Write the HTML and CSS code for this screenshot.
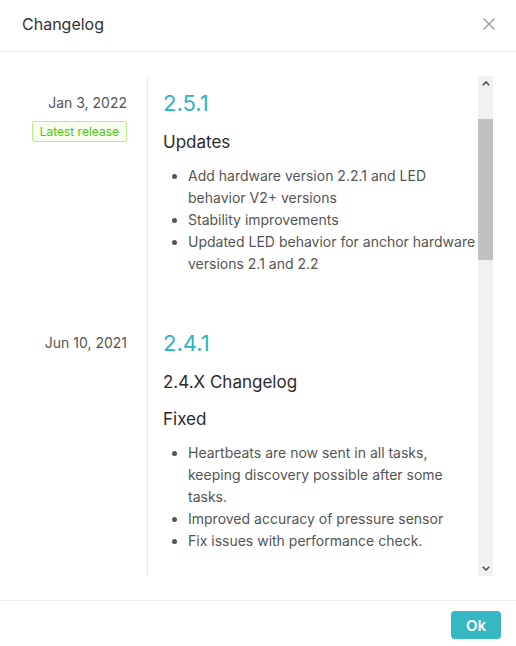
FILE: index.html
```html
<!DOCTYPE html>
<html lang="en">
<head>
  <meta charset="UTF-8" />
  <meta name="viewport" content="width=device-width, initial-scale=1.0"/>
  <title>Changelog</title>
  <link rel="stylesheet" href="styles.css">
</head>
<body>
  <div class="modal">
    <div class="modal-header">
      <span class="modal-title">Changelog</span>
      <button class="close-btn" aria-label="Close">
        <svg width="12" height="12" viewBox="0 0 12 12">
          <path d="M0.5 0.5 L11.5 11.5 M11.5 0.5 L0.5 11.5" stroke="#9a9a9a" stroke-width="1.4" fill="none"/>
        </svg>
      </button>
    </div>

    <div class="modal-body">
      <div class="timeline">
        <div class="release">
          <div class="release-date">
            <div class="date">Jan 3, 2022</div>
            <span class="tag">Latest release</span>
          </div>
          <div class="release-body">
            <div class="version">2.5.1</div>
            <h3>Updates</h3>
            <ul>
              <li>Add hardware version 2.2.1 and LED behavior V2+ versions</li>
              <li>Stability improvements</li>
              <li>Updated LED behavior for anchor hardware versions 2.1 and 2.2</li>
            </ul>
          </div>
        </div>

        <div class="release">
          <div class="release-date">
            <div class="date">Jun 10, 2021</div>
          </div>
          <div class="release-body">
            <div class="version">2.4.1</div>
            <h3>2.4.X Changelog</h3>
            <h3>Fixed</h3>
            <ul>
              <li>Heartbeats are now sent in all tasks, keeping discovery possible after some tasks.</li>
              <li>Improved accuracy of pressure sensor</li>
              <li>Fix issues with performance check.</li>
            </ul>
          </div>
        </div>
      </div>

      <!-- barra de scroll -->
      <div class="scrollbar">
        <div class="scroll-arrow">
          <svg width="8" height="5" viewBox="0 0 8 5"><path d="M0.8 4.2 L4 1 L7.2 4.2" stroke="#505050" stroke-width="1.6" fill="none"/></svg>
        </div>
        <div class="scroll-gap"></div>
        <div class="scroll-thumb"></div>
        <div class="scroll-rest"></div>
        <div class="scroll-arrow">
          <svg width="8" height="5" viewBox="0 0 8 5"><path d="M0.8 0.8 L4 4 L7.2 0.8" stroke="#505050" stroke-width="1.6" fill="none"/></svg>
        </div>
      </div>
    </div>

    <div class="modal-footer">
      <button class="ok-btn">Ok</button>
    </div>
  </div>
</body>
</html>
```

FILE: styles.css
```css
body {
  margin: 0;
  background: #fff;
  font-family: Inter, 'Liberation Sans', sans-serif;
  color: #333;
}

.modal {
  width: 516px;
  height: 646px;
  display: flex;
  flex-direction: column;
}

.modal-header {
  height: 51px;
  border-bottom: 1px solid #ececec;
  display: flex;
  align-items: center;
  justify-content: space-between;
  padding: 0 21px 0 22px;
  box-sizing: content-box;
}

.modal-title {
  font-size: 16px;
  color: #333;
  padding-bottom: 3px;
}

.close-btn {
  background: transparent;
  border: none;
  padding: 0;
  width: 12px;
  height: 12px;
  display: flex;
  cursor: pointer;
  margin-bottom: 3px;
}

.modal-body {
  height: 500px;
  padding: 24px 23px 24px 0;
  display: flex;
}

.timeline {
  flex: 1;
  overflow: hidden;
}

.release {
  display: flex;
}

.release-date {
  width: 127px;
  padding-top: 13px;
  display: flex;
  flex-direction: column;
  align-items: flex-end;
}

.date {
  font-size: 14px;
  line-height: 28px;
  color: #555;
}

.tag {
  margin-top: 4px;
  font-size: 12px;
  line-height: 19px;
  padding: 0 7px;
  color: #52c41a;
  background: #f6ffed;
  border: 1px solid #b7eb8f;
  border-radius: 2px;
}

.release-body {
  flex: 1;
  margin-left: 20px;
  border-left: 1px solid #e8e8e8;
  padding: 13px 0 41px 15px;
}

.version {
  font-size: 22px;
  line-height: 28px;
  color: #2fb4c5;
}

h3 {
  margin: 13px 0 0;
  font-size: 17px;
  line-height: 24px;
  font-weight: 400;
  color: #2b2b2b;
}

ul {
  margin: 11px 0 0;
  padding-left: 25px;
  font-size: 14px;
  line-height: 22px;
  color: #555;
}

.scrollbar {
  width: 15px;
  background: #f1f1f1;
  display: flex;
  flex-direction: column;
}

.scroll-arrow {
  height: 15px;
  display: flex;
  align-items: center;
  justify-content: center;
}

.scroll-gap {
  height: 28px;
}

.scroll-thumb {
  height: 141px;
  background: #c1c1c1;
}

.scroll-rest {
  flex: 1;
}

.modal-footer {
  flex: 1;
  border-top: 1px solid #ececec;
  display: flex;
  justify-content: flex-end;
  align-items: flex-start;
  padding: 10px 15px 0 0;
}

.ok-btn {
  width: 50px;
  height: 28px;
  border: none;
  border-radius: 4px;
  background: #35b7c4;
  color: #fff;
  font-family: Inter, 'Liberation Sans', sans-serif;
  font-size: 15px;
  font-weight: 600;
  cursor: pointer;
}
```
